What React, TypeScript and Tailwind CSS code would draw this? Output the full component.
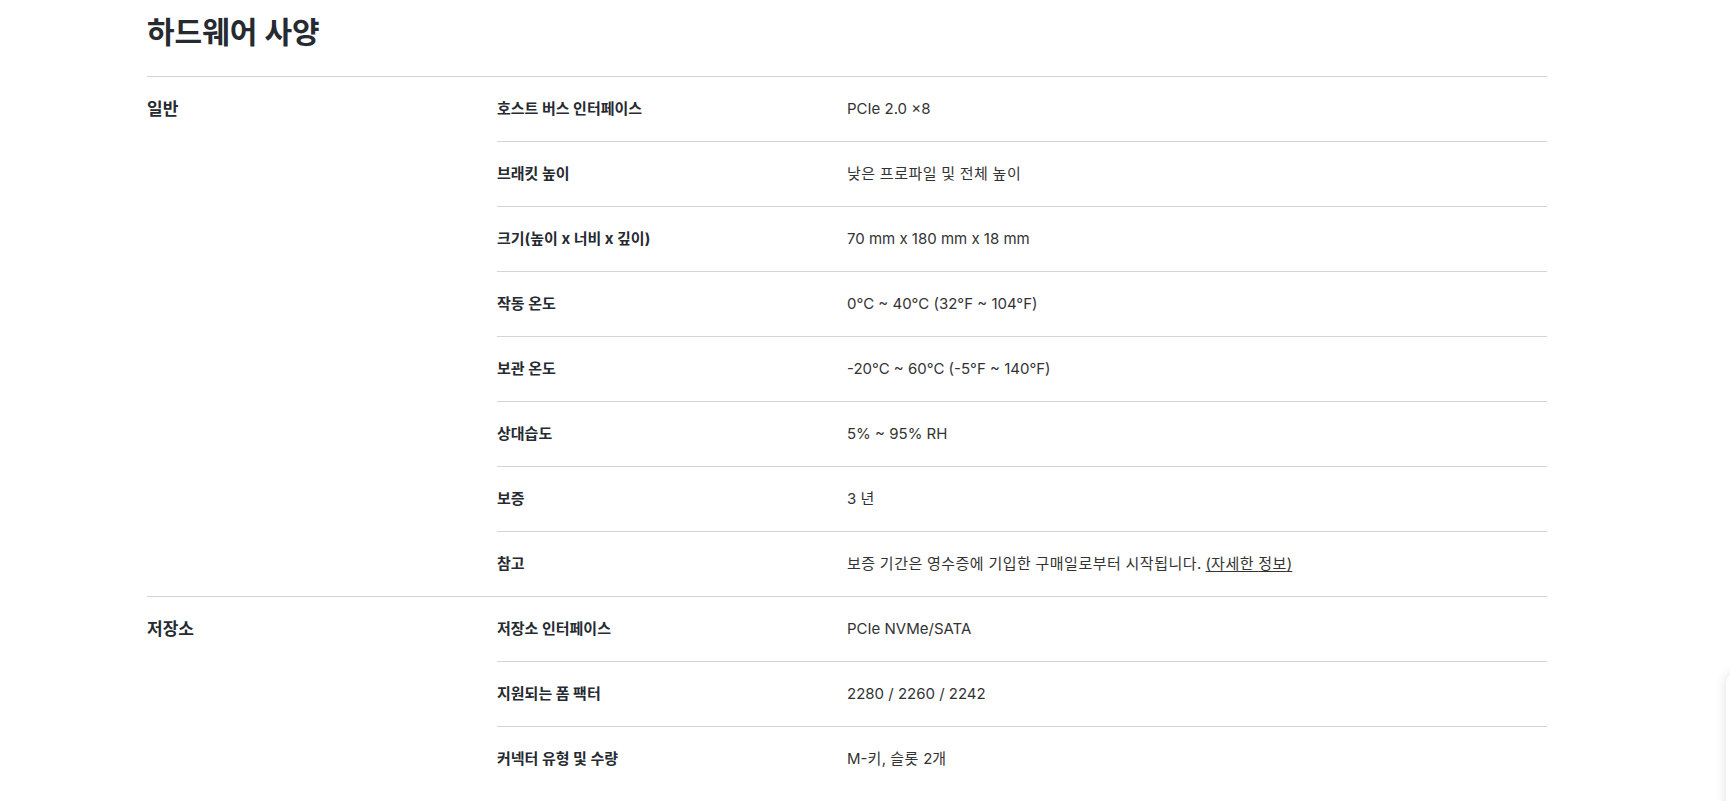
import React from "react";

type Spec = {
	label: string;
	value: string;
	link?: string;
};

type Section = {
	title: string;
	specs: Spec[];
};

const sections: Section[] = [
	{
		title: "일반",
		specs: [
			{ label: "호스트 버스 인터페이스", value: "PCIe 2.0 ×8" },
			{ label: "브래킷 높이", value: "낮은 프로파일 및 전체 높이" },
			{ label: "크기(높이 x 너비 x 깊이)", value: "70 mm x 180 mm x 18 mm" },
			{ label: "작동 온도", value: "0°C ~ 40°C (32°F ~ 104°F)" },
			{ label: "보관 온도", value: "-20°C ~ 60°C (-5°F ~ 140°F)" },
			{ label: "상대습도", value: "5% ~ 95% RH" },
			{ label: "보증", value: "3 년" },
			{
				label: "참고",
				value: "보증 기간은 영수증에 기입한 구매일로부터 시작됩니다.",
				link: "(자세한 정보)",
			},
		],
	},
	{
		title: "저장소",
		specs: [
			{ label: "저장소 인터페이스", value: "PCIe NVMe/SATA" },
			{ label: "지원되는 폼 팩터", value: "2280 / 2260 / 2242" },
			{ label: "커넥터 유형 및 수량", value: "M-키, 슬롯 2개" },
		],
	},
];

const HANGUL = /([\u3131-\u318E\uAC00-\uD7A3]+)/;

// hangul runs get a little tracking so they sit as wide as the original font
function Mixed({ text }: { text: string }) {
	const parts = text.split(HANGUL);
	return (
		<>
			{parts.map((p, i) =>
				i % 2 === 1 ? (
					<span key={i} className="tracking-[0.5px]">
						{p}
					</span>
				) : (
					<React.Fragment key={i}>{p}</React.Fragment>
				),
			)}
		</>
	);
}

export default function App() {
	return (
		<div
			className="relative min-h-[801px] overflow-hidden bg-white text-[#333]"
			style={{ fontFamily: 'Inter, "Noto Sans CJK KR", "Noto Sans", sans-serif' }}
		>
			<div className="mx-[147px] w-[1400px]">
				<h2 className="pt-[14px] pb-[26px] text-[30px] font-bold leading-[36px] text-[#262a31]">
					하드웨어 사양
				</h2>

				{sections.map((section) => (
					<div
						key={section.title}
						className="grid grid-cols-4 border-t border-[#d4d4d4]"
					>
						<div className="py-[22px] text-[17px] font-bold leading-[20px] text-[#262a31]">
							{section.title}
						</div>
						<div className="col-span-3">
							{section.specs.map((spec, i) => (
								<div
									key={spec.label}
									className={
										i > 0
											? "grid grid-cols-3 border-t border-[#d4d4d4]"
											: "grid grid-cols-3"
									}
								>
									<div className="py-[22px] text-[15px] font-bold leading-[20px] text-[#262a31]">
										{spec.label}
									</div>
									<div className="col-span-2 py-[22px] text-[15px] leading-[20px] text-[#333]">
										<Mixed text={spec.value} />
										{spec.link && (
											<>
												{" "}
												<a href="#" className="underline underline-offset-2">
													<Mixed text={spec.link} />
												</a>
											</>
										)}
									</div>
								</div>
							))}
						</div>
					</div>
				))}
			</div>

			{/* floating widget peeking in at the right edge */}
			<div className="absolute top-[672px] right-[-60px] h-[160px] w-[64px] rounded-l-[12px] bg-white shadow-[0_0_12px_rgba(0,0,0,0.12)]" />
		</div>
	);
}
